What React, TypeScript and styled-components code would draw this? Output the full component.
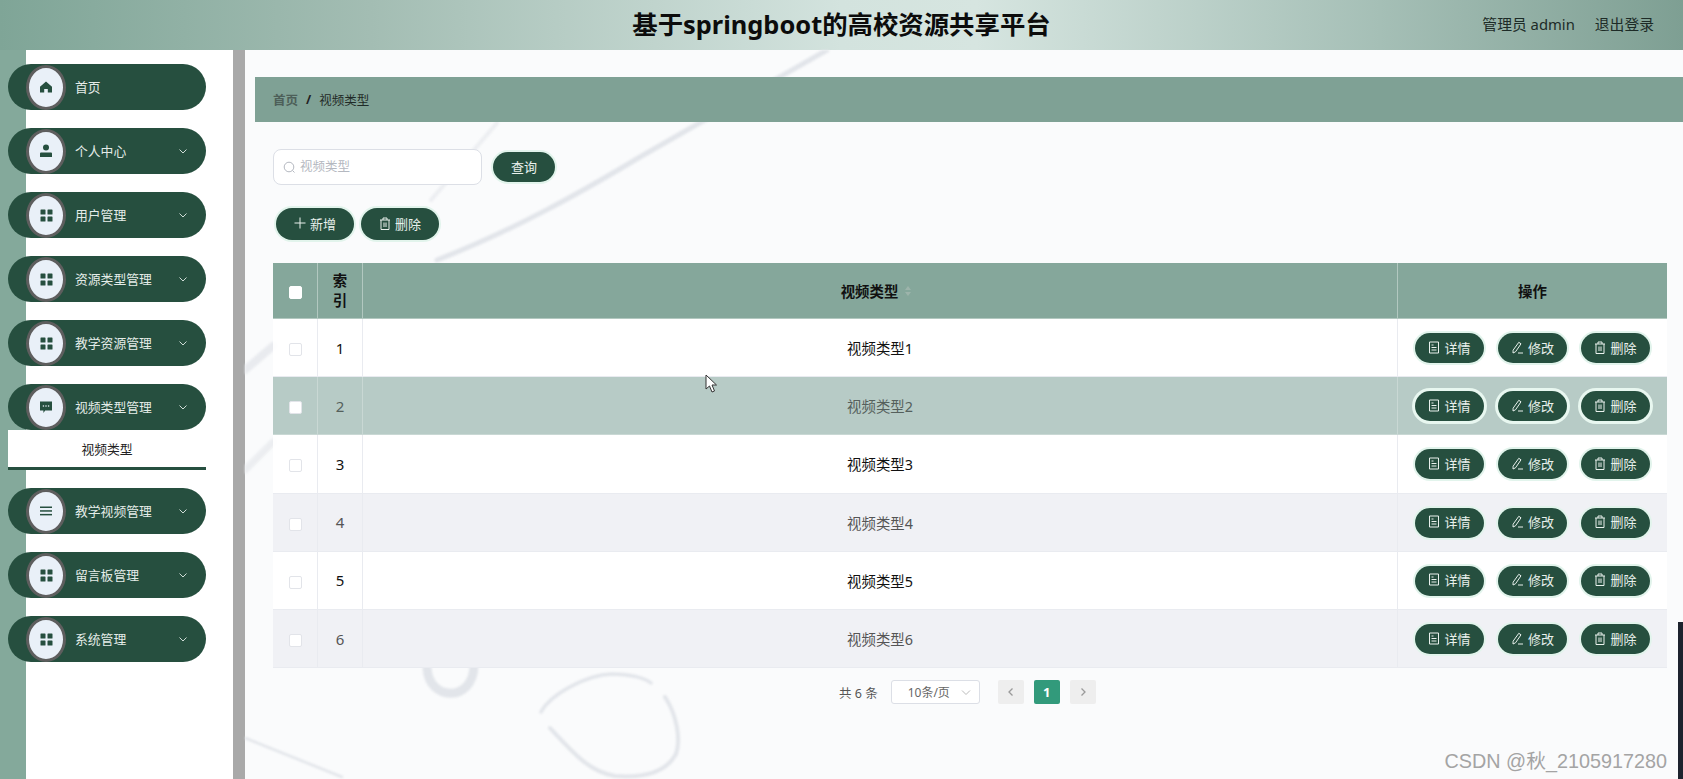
import React from 'react';
import styled, { createGlobalStyle } from 'styled-components';

const Global = createGlobalStyle`
  html, body { margin: 0; padding: 0; height: 100%; overflow: hidden; }
  body { font-family: "Noto Sans", "Noto Sans CJK SC", sans-serif; background: #fff; }
  * { box-sizing: border-box; }
`;

const DARK = '#264f3f';

const Page = styled.div`
  position: relative;
  width: 1683px;
  height: 779px;
  display: flex;
  flex-direction: column;
  overflow: hidden;
`;

const TopBar = styled.header`
  flex: 0 0 50px;
  position: relative;
  display: flex;
  align-items: center;
  justify-content: flex-end;
  padding: 0 29px 3px 0;
  gap: 20px;
  font-size: 14.8px;
  color: #1d2b27;
  background: linear-gradient(90deg, #7fa597 0%, #a3bdb3 22%, #d3e3de 50%, #d6e5e0 58%, #a5bfb6 82%, #7e9f93 100%);
`;

const Title = styled.h1`
  position: absolute;
  left: 0;
  width: 1683px;
  top: 4px;
  margin: 0;
  text-align: center;
  font-size: 25.4px;
  line-height: 40px;
  font-weight: 700;
  color: #0c0c0c;
`;

const Body = styled.div`
  flex: 1;
  display: flex;
  min-height: 0;
`;

const Sidebar = styled.nav`
  flex: 0 0 245px;
  padding: 14px 27px 0 8px;
  background: linear-gradient(90deg, #84a99b 26px, #fff 26px);
  border-right: 12px solid #a9a9a9;
  display: flex;
  flex-direction: column;
  gap: 18px;
`;

const NavGroup = styled.div`
  display: flex;
  flex-direction: column;
`;

const NavItem = styled.div`
  height: 46px;
  width: 198px;
  border-radius: 23px;
  background: ${DARK};
  display: flex;
  align-items: center;
  color: #e4ece8;
  font-size: 12.8px;
  padding: 0 18px 0 18px;
`;

const NavBadge = styled.span`
  flex: 0 0 40px;
  height: 45px;
  border-radius: 50%;
  background: #e9f0f8;
  border: 3px solid #5e5e5e;
  display: flex;
  align-items: center;
  justify-content: center;
  color: ${DARK};
  margin-right: 9px;
`;

const NavLabel = styled.span`
  flex: 1;
  padding-bottom: 2px;
`;

const SubItem = styled.div`
  height: 40px;
  width: 198px;
  background: #fff;
  border-bottom: 3px solid ${DARK};
  display: flex;
  align-items: center;
  justify-content: center;
  font-size: 12.8px;
  color: #222;
`;

const Main = styled.main`
  flex: 1;
  position: relative;
  min-width: 0;
  padding-top: 27px;
  background: #fafbfc;
`;

const Backdrop = styled.svg`
  position: absolute;
  left: 0;
  top: 0;
  width: 1438px;
  height: 729px;
  filter: blur(1px);
`;

const Crumbs = styled.div`
  position: relative;
  margin-left: 10px;
  height: 45px;
  background: #7fa195;
  display: flex;
  align-items: center;
  gap: 8px;
  padding-left: 18px;
  font-size: 12.5px;
  color: #1f2a27;
`;

const CrumbHome = styled.span`
  font-weight: 600;
  color: #4d5f59;
`;

const CrumbSep = styled.span`
  font-weight: 700;
  color: #222;
`;

const Content = styled.div`
  position: relative;
  padding: 27px 16px 0 28px;
`;

const SearchRow = styled.div`
  display: flex;
  align-items: center;
  gap: 11px;
`;

const SearchBox = styled.label`
  width: 209px;
  height: 36px;
  border: 1px solid #dcdfe6;
  border-radius: 8px;
  background: #fff;
  display: flex;
  align-items: center;
  gap: 4px;
  padding: 0 9px;
  color: #b4b8c0;
`;

const SearchInput = styled.input`
  flex: 1;
  min-width: 0;
  border: 0;
  outline: 0;
  background: transparent;
  font: inherit;
  font-size: 12.5px;
  padding: 0 0 2px;
  &::placeholder { color: #b4b8c0; opacity: 1; }
`;

const Pill = styled.button<{ $w: number; $h?: number; $strong?: boolean }>`
  width: ${(p) => p.$w}px;
  height: ${(p) => p.$h ?? 30}px;
  border: 0;
  border-radius: 16px;
  background: ${DARK};
  color: #e9f1ed;
  font-family: inherit;
  font-size: 13px;
  display: inline-flex;
  align-items: center;
  justify-content: center;
  gap: 4px;
  padding: 0 0 2px;
  box-shadow: 0 0 0 ${(p) => (p.$strong ? 3 : 2)}px ${(p) => (p.$strong ? '#e8f7f0' : '#e2f4ec')};
`;

const ActionRow = styled.div`
  display: flex;
  gap: 7px;
  margin: 23px 0 23px 3px;
`;

const Table = styled.div`
  width: 1394px;
`;

const Row = styled.div<{ $bg: string; $head?: boolean; $line: string }>`
  display: grid;
  grid-template-columns: 45px 45px 1fr 269px;
  height: ${(p) => (p.$head ? '56px' : '58.2px')};
  background: ${(p) => p.$bg};
  border-bottom: 1px solid ${(p) => p.$line};
  & > div { border-right: 1px solid ${(p) => p.$line}; }
  & > div:last-child { border-right: 0; }
`;

const Cell = styled.div<{ $tone?: string; $bold?: boolean }>`
  display: flex;
  align-items: center;
  justify-content: center;
  font-size: 14.4px;
  color: ${(p) => p.$tone ?? '#111'};
  font-weight: ${(p) => (p.$bold ? 700 : 400)};
  gap: 5px;
`;

const CheckCell = styled(Cell)`
  padding-top: 4px;
`;

const IndexCell = styled(Cell)`
  font-size: 15px;
`;

const HeadIndex = styled(Cell)`
  padding: 0 12px;
  font-size: 14.4px;
  line-height: 20px;
  text-align: center;
`;

const HeadMain = styled(Cell)`
  padding-right: 8px;
  gap: 7px;
`;

const OpsCell = styled(Cell)`
  justify-content: flex-start;
  padding: 1px 0 0 17px;
  gap: 14px;
`;

const Check = styled.span<{ $head?: boolean }>`
  width: 13px;
  height: 13px;
  border-radius: 2px;
  background: #fff;
  border: 1px solid ${(p) => (p.$head ? '#ffffff' : '#e2e4e9')};
`;

const SortMark = styled.span`
  display: inline-flex;
  flex-direction: column;
  gap: 2px;
`;

const Caret = styled.i<{ $up?: boolean }>`
  width: 0;
  height: 0;
  border-left: 3px solid transparent;
  border-right: 3px solid transparent;
  ${(p) => (p.$up ? 'border-bottom: 4px solid #9db4ab;' : 'border-top: 4px solid #9db4ab;')}
`;

const Pager = styled.div`
  display: flex;
  align-items: center;
  margin: 12px 0 0 566px;
  font-size: 12.5px;
  color: #555;
`;

const Total = styled.span`
  margin-right: 13px;
`;

const SizeSelect = styled.div`
  width: 89px;
  height: 24px;
  border: 1px solid #dcdfe6;
  border-radius: 3px;
  background: #fff;
  display: flex;
  align-items: center;
  justify-content: space-between;
  padding: 0 8px 0 16px;
  margin-right: 18px;
  color: #666;
  font-size: 12px;
`;

const PageBtn = styled.span<{ $on?: boolean }>`
  width: 26px;
  height: 24px;
  border-radius: 2px;
  margin-right: 10px;
  display: flex;
  align-items: center;
  justify-content: center;
  background: ${(p) => (p.$on ? '#329a7b' : '#eeeeee')};
  color: ${(p) => (p.$on ? '#fff' : '#9a9a9a')};
  font-weight: 700;
  font-size: 13px;
`;

const Stamp = styled.span`
  position: absolute;
  right: 16px;
  bottom: 6px;
  font-family: "Liberation Sans", "Noto Sans CJK SC", sans-serif;
  font-size: 19.8px;
  line-height: 24px;
  color: #a4a4a4;
`;

const EdgeBar = styled.div`
  position: absolute;
  right: 0;
  top: 622px;
  bottom: 0;
  width: 5px;
  background: #1d232e;
`;

const Pointer = styled.svg`
  position: absolute;
  left: 705px;
  top: 374px;
`;

/* ---------- drawn icons ---------- */

const HomeIcon = () => (
  <svg width="14" height="14" viewBox="0 0 14 14" fill="currentColor">
    <path d="M7 1.500 13 6.800V12.500H8.800V9H5.200V12.500H1V6.800Z" />
  </svg>
);
const UserIcon = () => (
  <svg width="14" height="14" viewBox="0 0 14 14" fill="currentColor">
    <circle cx="7" cy="3.600" r="3" />
    <path d="M2 8.500h10a1 1 0 0 1 1 1V13H1V9.500a1 1 0 0 1 1-1z" />
  </svg>
);
const GridIcon = () => (
  <svg width="13" height="13" viewBox="0 0 13 13" fill="currentColor">
    <rect x="0.500" y="0.500" width="5" height="5" rx="0.600" />
    <rect x="7.500" y="0.500" width="5" height="5" rx="0.600" />
    <rect x="0.500" y="7.500" width="5" height="5" rx="0.600" />
    <rect x="7.500" y="7.500" width="5" height="5" rx="0.600" />
  </svg>
);
const ChatIcon = () => (
  <svg width="14" height="14" viewBox="0 0 14 14">
    <path fill="currentColor" d="M1 1.500h12v9H6.200L4.400 13v-2.500H1z" />
    <circle cx="4.400" cy="6" r="0.800" fill="#e9f0f8" />
    <circle cx="7" cy="6" r="0.800" fill="#e9f0f8" />
    <circle cx="9.600" cy="6" r="0.800" fill="#e9f0f8" />
  </svg>
);
const LinesIcon = () => (
  <svg width="14" height="14" viewBox="0 0 14 14" fill="currentColor">
    <rect x="1" y="2.500" width="12" height="1.500" />
    <rect x="1" y="6.200" width="12" height="1.500" />
    <rect x="1" y="9.900" width="12" height="1.500" />
  </svg>
);
const Chevron = () => (
  <svg width="10" height="10" viewBox="0 0 10 10" fill="none" stroke="#cfdcd6" strokeWidth="1">
    <path d="M1.500 3.500 5 7l3.500-3.500" />
  </svg>
);
const SearchGlyph = () => (
  <svg width="13" height="13" viewBox="0 0 13 13" fill="none" stroke="#b4b8c0" strokeWidth="1">
    <circle cx="6" cy="6" r="4.800" />
    <path d="m9.500 9.500 2 2" />
  </svg>
);
const PlusGlyph = () => (
  <svg width="12" height="12" viewBox="0 0 12 12" stroke="currentColor" strokeWidth="1">
    <path d="M6 .5v11M.5 6h11" />
  </svg>
);
const TrashGlyph = () => (
  <svg width="12" height="13" viewBox="0 0 12 13" fill="none" stroke="currentColor" strokeWidth="1">
    <path d="M1 3h10M4 3V1h4v2M2 3v9.500h8V3M5 5.500v4.500M7 5.500v4.500" />
  </svg>
);
const DocGlyph = () => (
  <svg width="12" height="13" viewBox="0 0 12 13" fill="none" stroke="currentColor" strokeWidth="1">
    <path d="M1.500 1h9v11h-9zM3.500 4h2M3.500 6.500h5M3.500 9h5" />
  </svg>
);
const EditGlyph = () => (
  <svg width="13" height="13" viewBox="0 0 13 13" fill="none" stroke="currentColor" strokeWidth="1">
    <path d="M7.800 1.300 10 2.800 4.500 10.800 2 12l.1-2.800zM7 12h5" />
  </svg>
);
const ArrowGlyph = ({ flip }: { flip?: boolean }) => (
  <svg width="10" height="10" viewBox="0 0 10 10" fill="none" stroke="currentColor" strokeWidth="1.300">
    <path d={flip ? 'M3.500 1.500 7 5 3.500 8.500' : 'M6.500 1.500 3 5l3.500 3.500'} />
  </svg>
);

/* ---------- data ---------- */

const menu: { label: string; icon: React.ReactNode; sub?: string; leaf?: boolean }[] = [
  { label: '首页', icon: <HomeIcon />, leaf: true },
  { label: '个人中心', icon: <UserIcon /> },
  { label: '用户管理', icon: <GridIcon /> },
  { label: '资源类型管理', icon: <GridIcon /> },
  { label: '教学资源管理', icon: <GridIcon /> },
  { label: '视频类型管理', icon: <ChatIcon />, sub: '视频类型' },
  { label: '教学视频管理', icon: <LinesIcon /> },
  { label: '留言板管理', icon: <GridIcon /> },
  { label: '系统管理', icon: <GridIcon /> },
];

const rowStyles = [
  { bg: 'rgba(255,255,255,.9)', tone: '#111' },
  { bg: '#b7cbc6', tone: '#55605c' },
  { bg: 'rgba(255,255,255,.9)', tone: '#111' },
  { bg: '#f0f1f5', tone: '#555' },
  { bg: 'rgba(255,255,255,.9)', tone: '#111' },
  { bg: '#f0f1f5', tone: '#555' },
];

export default function App() {
  return (
    <Page>
      <Global />
      <TopBar>
        <Title>基于springboot的高校资源共享平台</Title>
        <span>管理员 admin</span>
        <span>退出登录</span>
      </TopBar>
      <Body>
        <Sidebar>
          {menu.map((m) => (
            <NavGroup key={m.label}>
              <NavItem>
                <NavBadge>{m.icon}</NavBadge>
                <NavLabel>{m.label}</NavLabel>
                {!m.leaf && <Chevron />}
              </NavItem>
              {m.sub && <SubItem>{m.sub}</SubItem>}
            </NavGroup>
          ))}
        </Sidebar>
        <Main>
          <Backdrop viewBox="0 0 1438 729" fill="none" stroke="#e2e5ea" strokeLinecap="round">
            <path d="M192 210C270 180 340 140 395 107L582 0" strokeWidth="5" />
            <path d="M252 73 186 150" strokeWidth="4" stroke="#eceef1" />
            <path d="M0 320 28 296" strokeWidth="8" stroke="#e9ebef" />
            <path d="M0 420 28 392" strokeWidth="7" stroke="#eceef1" />
            <path d="M182 618C184 652 228 652 229 616" strokeWidth="9" />
            <path d="M296 662C305 645 340 625 367 624 385 624 400 628 406 633" strokeWidth="3.500" />
            <path d="M420 647C432 665 436 690 431 704 420 724 395 728 370 726 345 722 330 705 305 678" strokeWidth="4" />
            <path d="M0 688C35 702 70 716 97 727" strokeWidth="2.500" />
          </Backdrop>
          <Crumbs>
            <CrumbHome>首页</CrumbHome>
            <CrumbSep>/</CrumbSep>
            <span>视频类型</span>
          </Crumbs>
          <Content>
            <SearchRow>
              <SearchBox>
                <SearchGlyph />
                <SearchInput placeholder="视频类型" />
              </SearchBox>
              <Pill $w={62}>查询</Pill>
            </SearchRow>
            <ActionRow>
              <Pill $w={78} $h={32}><PlusGlyph /> 新增</Pill>
              <Pill $w={78} $h={32}><TrashGlyph /> 删除</Pill>
            </ActionRow>
            <Table>
              <Row $head $bg="#85a79b" $line="#b2c8c0">
                <CheckCell><Check $head /></CheckCell>
                <HeadIndex $bold>索引</HeadIndex>
                <HeadMain $bold>
                  视频类型
                  <SortMark><Caret $up /><Caret /></SortMark>
                </HeadMain>
                <Cell $bold>操作</Cell>
              </Row>
              {rowStyles.map((r, i) => (
                <Row key={i} $bg={r.bg} $line={i === 1 ? '#c9d8d4' : '#e9ebf0'}>
                  <CheckCell><Check /></CheckCell>
                  <IndexCell $tone={r.tone}>{i + 1}</IndexCell>
                  <Cell $tone={r.tone}>视频类型{i + 1}</Cell>
                  <OpsCell>
                    <Pill $w={69} $strong={i === 1}><DocGlyph /> 详情</Pill>
                    <Pill $w={69} $strong={i === 1}><EditGlyph /> 修改</Pill>
                    <Pill $w={69} $strong={i === 1}><TrashGlyph /> 删除</Pill>
                  </OpsCell>
                </Row>
              ))}
            </Table>
            <Pager>
              <Total>共 6 条</Total>
              <SizeSelect>
                10条/页
                <svg width="10" height="10" viewBox="0 0 10 10" fill="none" stroke="#bbb">
                  <path d="M1 3.500 5 7.500l4-4" />
                </svg>
              </SizeSelect>
              <PageBtn><ArrowGlyph /></PageBtn>
              <PageBtn $on>1</PageBtn>
              <PageBtn><ArrowGlyph flip /></PageBtn>
            </Pager>
          </Content>
        </Main>
      </Body>
      <Pointer width="13" height="20" viewBox="0 0 13 20">
        <path d="M1 1v14l3.500-3 2.500 6 2.500-1-2.500-6h4.500z" fill="#fff" stroke="#333" strokeWidth="1" />
      </Pointer>
      <EdgeBar />
      <Stamp>CSDN @秋_2105917280</Stamp>
    </Page>
  );
}
